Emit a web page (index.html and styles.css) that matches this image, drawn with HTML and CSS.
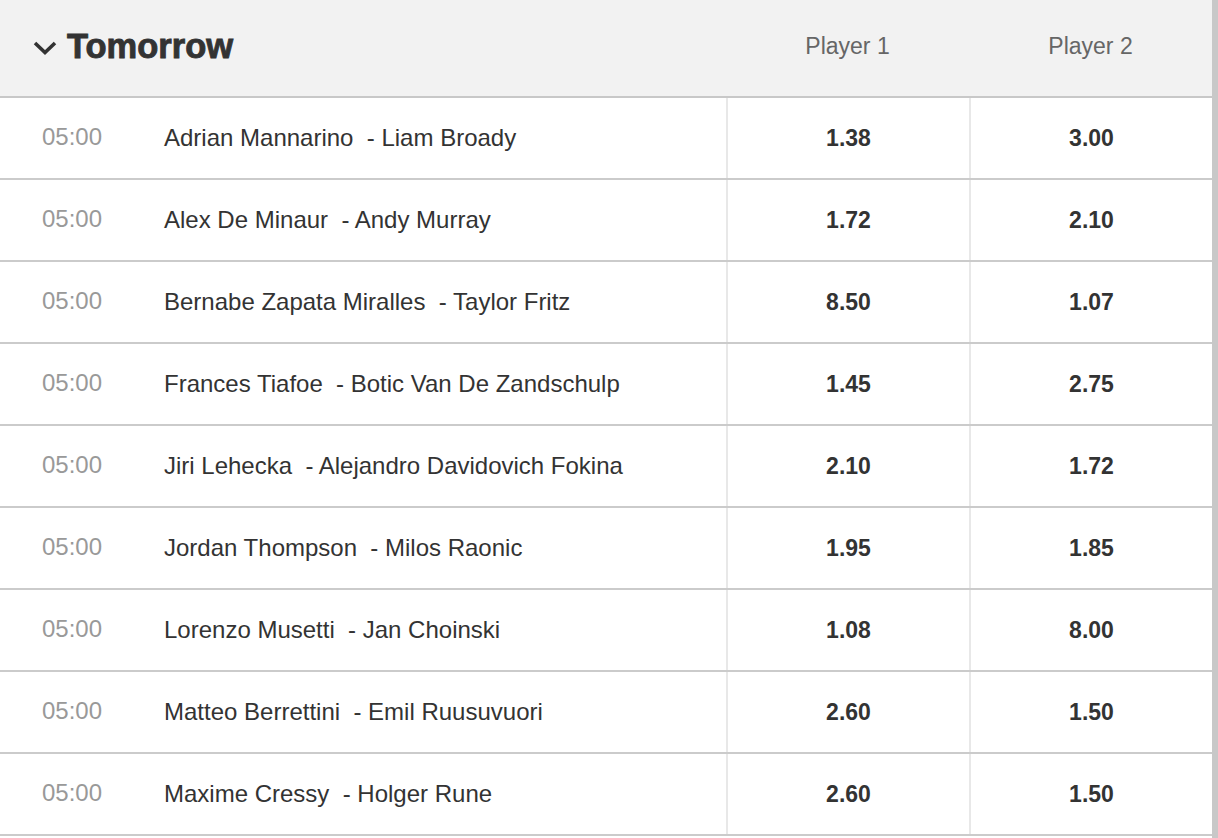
FILE: index.html
```html
<!DOCTYPE html>
<html>
<head>
<meta charset="utf-8">
<link rel="stylesheet" href="styles.css">
</head>
<body>
<div class="table">
  <div class="head">
    <div class="title">
      <svg class="chev" width="24" height="14" viewBox="0 0 24 14"><polyline points="2,2 12,11.5 22,2" fill="none" stroke="#333" stroke-width="3.6"/></svg>
      <span>Tomorrow</span>
    </div>
    <div class="hcol">Player 1</div>
    <div class="hcol">Player 2</div>
  </div>
  <div class="row"><div class="match"><span class="time">05:00</span><span class="names">Adrian Mannarino&nbsp; - Liam Broady</span></div><div class="odd">1.38</div><div class="odd">3.00</div></div>
  <div class="row"><div class="match"><span class="time">05:00</span><span class="names">Alex De Minaur&nbsp; - Andy Murray</span></div><div class="odd">1.72</div><div class="odd">2.10</div></div>
  <div class="row"><div class="match"><span class="time">05:00</span><span class="names">Bernabe Zapata Miralles&nbsp; - Taylor Fritz</span></div><div class="odd">8.50</div><div class="odd">1.07</div></div>
  <div class="row"><div class="match"><span class="time">05:00</span><span class="names">Frances Tiafoe&nbsp; - Botic Van De Zandschulp</span></div><div class="odd">1.45</div><div class="odd">2.75</div></div>
  <div class="row"><div class="match"><span class="time">05:00</span><span class="names">Jiri Lehecka&nbsp; - Alejandro Davidovich Fokina</span></div><div class="odd">2.10</div><div class="odd">1.72</div></div>
  <div class="row"><div class="match"><span class="time">05:00</span><span class="names">Jordan Thompson&nbsp; - Milos Raonic</span></div><div class="odd">1.95</div><div class="odd">1.85</div></div>
  <div class="row"><div class="match"><span class="time">05:00</span><span class="names">Lorenzo Musetti&nbsp; - Jan Choinski</span></div><div class="odd">1.08</div><div class="odd">8.00</div></div>
  <div class="row"><div class="match"><span class="time">05:00</span><span class="names">Matteo Berrettini&nbsp; - Emil Ruusuvuori</span></div><div class="odd">2.60</div><div class="odd">1.50</div></div>
  <div class="row"><div class="match"><span class="time">05:00</span><span class="names">Maxime Cressy&nbsp; - Holger Rune</span></div><div class="odd">2.60</div><div class="odd">1.50</div></div>
</div>
</body>
</html>
```
FILE: styles.css
```css
html, body {
  margin: 0;
  padding: 0;
  background: #ffffff;
  overflow: hidden;
}
body {
  font-family: "Liberation Sans", Arial, sans-serif;
  color: #333;
}
.table {
  width: 1212px;
  border-right: 6px solid #c8c8c8;
  height: 838px;
  overflow: hidden;
}
.head {
  display: grid;
  grid-template-columns: 726px 243px 243px;
  height: 96px;
  background: #f2f2f2;
  border-bottom: 2px solid #c8c8c8;
}
.title {
  display: flex;
  align-items: center;
  padding-left: 33px;
  gap: 10px;
  font-weight: bold;
  font-size: 34.5px;
  color: #333;
  padding-bottom: 3px;
  -webkit-text-stroke: 0.9px #333;
}
.chev {
  display: block;
  margin-top: 3px;
}
.hcol {
  display: flex;
  align-items: center;
  justify-content: center;
  font-size: 23px;
  color: #666;
  padding-bottom: 4px;
}
.row {
  display: grid;
  grid-template-columns: 726px 243px 243px;
  height: 80px;
  border-bottom: 2px solid #cbcbcb;
}
.match {
  display: flex;
  align-items: center;
  padding-left: 42px;
}
.time {
  width: 122px;
  font-size: 24px;
  color: #999;
  margin-top: -2px;
}
.names {
  font-size: 24px;
  color: #333;
}
.odd {
  display: flex;
  align-items: center;
  justify-content: center;
  border-left: 2px solid #e8e8e8;
  font-size: 23px;
  font-weight: bold;
  color: #333;
}
```
